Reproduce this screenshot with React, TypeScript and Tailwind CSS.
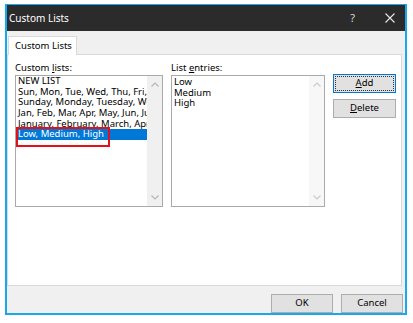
import React from "react";

function Up() {
  return (
    <svg width="8" height="5" viewBox="0 0 8 5" className="block">
      <polyline points="0.5,4.5 4,1 7.5,4.5" fill="none" stroke="#b5b5b5" strokeWidth="1.2" />
    </svg>
  );
}
function Down() {
  return (
    <svg width="8" height="5" viewBox="0 0 8 5" className="block">
      <polyline points="0.5,0.5 4,4 7.5,0.5" fill="none" stroke="#b5b5b5" strokeWidth="1.2" />
    </svg>
  );
}

function ScrollBar() {
  return (
    <div className="w-[15px] h-full bg-[#f0f0f0] flex flex-col items-center justify-between py-[6px] shrink-0">
      <Up />
      <Down />
    </div>
  );
}

const customLists = [
  "NEW LIST",
  "Sun, Mon, Tue, Wed, Thu, Fri, Sat",
  "Sunday, Monday, Tuesday, Wednesday, Thursday",
  "Jan, Feb, Mar, Apr, May, Jun, Jul, Aug",
  "January, February, March, April, May",
  "Low, Medium, High",
];

export default function App() {
  return (
    <div className="w-[413px] h-[323px] bg-white pt-[4px] pl-[5px] font-['Noto_Sans','Open_Sans',sans-serif] text-black">
      <div className="w-[402px] h-[311px] border-[#17a9ee] border-x-2 border-t border-b-2 flex flex-col bg-[#f0f0f0]">
        {/* title bar */}
        <div className="h-[26px] bg-[#2b2b2b] flex items-center pl-[2px] text-white text-[10px] shrink-0">
          <span>Custom Lists</span>
          <span className="ml-auto mr-[30px] text-[11px] text-[#d8d8d8]">?</span>
          <svg width="10" height="10" viewBox="0 0 10 10" className="mr-[10px]">
            <path d="M0.5 0.5 L9.5 9.5 M9.5 0.5 L0.5 9.5" stroke="#e8e8e8" strokeWidth="1.1" />
          </svg>
        </div>
        {/* body */}
        <div className="flex-1 flex flex-col pt-[5px] pr-[3px]">
          <div className="flex">
            <div className="ml-[1px] w-[69px] h-[19px] bg-white border-t border-x border-[#d9d9d9] -mb-px relative z-10 flex items-center pl-[6px] text-[9.5px]">
              Custom Lists
            </div>
          </div>
          <div className="h-[232px] bg-white border border-[#d9d9d9] pt-[6px] pl-[7px] flex gap-[8px] text-[9.5px]">
            {/* left */}
            <div className="w-[148px] flex flex-col">
              <div className="h-[14px] leading-[14px]">
                Custom <span className="underline">l</span>ists:
              </div>
              <div className="relative h-[132px] border border-[#a9a9a9] flex">
                <div className="flex-1 overflow-hidden leading-[10.7px]">
                  {customLists.map((t, i) => (
                    <div
                      key={i}
                      className={
                        i === 5
                          ? "whitespace-nowrap overflow-hidden pl-[2px] h-[10.7px] bg-[#0078d7] text-white"
                          : "whitespace-nowrap overflow-hidden pl-[2px] h-[10.7px]"
                      }
                    >
                      {t}
                    </div>
                  ))}
                </div>
                <ScrollBar />
                <div className="absolute left-[0px] top-[51px] w-[94px] h-[20px] border-2 border-[#e3101a]" />
              </div>
            </div>
            {/* right */}
            <div className="w-[154px] flex flex-col">
              <div className="h-[14px] leading-[14px]">
                List <span className="underline">e</span>ntries:
              </div>
              <div className="h-[132px] border border-[#a9a9a9] flex">
                <div className="flex-1 overflow-hidden leading-[10.7px] pl-[2px] pt-[1px]">
                  <div>Low</div>
                  <div>Medium</div>
                  <div>High</div>
                </div>
                <div className="w-[15px] h-full bg-[#f5f5f5] flex flex-col items-center justify-between py-[6px] shrink-0 opacity-70">
                  <Up />
                  <Down />
                </div>
              </div>
            </div>
            {/* buttons */}
            <div className="w-[63px] flex flex-col gap-[6px] pt-[13px]">
              <div className="h-[19px] border border-[#0078d7] bg-[#e1e1e1] p-[1px]">
                <div className="h-full border border-dotted border-[#333] flex items-center justify-center">
                  <span>
                    <span className="underline">A</span>dd
                  </span>
                </div>
              </div>
              <div className="h-[19px] border border-[#adadad] bg-[#e1e1e1] flex items-center justify-center">
                <span>
                  <span className="underline">D</span>elete
                </span>
              </div>
            </div>
          </div>
          {/* footer */}
          <div className="flex-1 flex items-end justify-end gap-[8px] text-[9.5px]">
            <div className="w-[62px] h-[19px] border border-[#adadad] bg-[#e1e1e1] flex items-center justify-center">OK</div>
            <div className="w-[62px] h-[19px] border border-[#adadad] bg-[#e1e1e1] flex items-center justify-center -mr-[1px]">Cancel</div>
          </div>
        </div>
      </div>
    </div>
  );
}
